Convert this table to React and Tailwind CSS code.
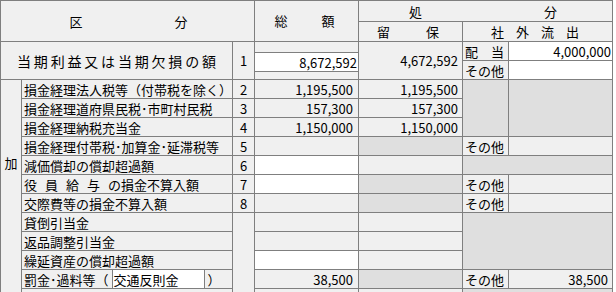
import React from "react";

const L = "bg-[#f0f0f0]";
const D = "bg-[#dfdfdf]";
const W = "bg-white";

function Cell({ className = "", children }) {
  return (
    <div className={"flex items-center overflow-hidden whitespace-nowrap text-[13px] leading-none text-black " + className}>
      {children}
    </div>
  );
}

function Num({ className = "", children }) {
  return <Cell className={"justify-end " + className}>{children}</Cell>;
}

export default function App() {
  return (
    <div className="h-[292px] w-[616px] overflow-hidden bg-white font-['Noto_Sans_CJK_JP',sans-serif]">
      <div className="grid w-fit grid-cols-[20px_210px_21px_103px_103px_45px_103px] grid-rows-[20px_19px_repeat(14,18px)] gap-px bg-[#7f7f7f] p-px">
        {/* header */}
        <Cell className={L + " col-start-1 col-span-3 row-start-1 row-span-2 justify-center gap-[92px] pl-[2px]"}>
          <span>区</span>
          <span>分</span>
        </Cell>
        <Cell className={L + " col-start-4 row-start-1 row-span-2 justify-center gap-[34px] pr-[4px] pb-[1px]"}>
          <span>総</span>
          <span>額</span>
        </Cell>
        <Cell className={L + " col-start-5 col-span-3 row-start-1 justify-center gap-[122px] pr-[5px]"}>
          <span>処</span>
          <span>分</span>
        </Cell>
        <Cell className={L + " col-start-5 row-start-2 justify-center gap-[36px] pr-[5px]"}>
          <span>留</span>
          <span>保</span>
        </Cell>
        <Cell className={L + " col-start-6 col-span-2 row-start-2 justify-center gap-[12px] pr-[5px]"}>
          <span>社</span>
          <span>外</span>
          <span>流</span>
          <span>出</span>
        </Cell>

        {/* row 1 */}
        <Cell className={L + " col-start-1 col-span-2 row-start-3 row-span-2 justify-between px-[16px] text-[14px]"}>
          {"当期利益又は当期欠損の額".split("").map((c, i) => (
            <span key={i}>{c}</span>
          ))}
        </Cell>
        <Cell className={L + " col-start-3 row-start-3 row-span-2 justify-center"}>1</Cell>
        <div className={L + " col-start-4 row-start-3 row-span-2 flex flex-col"}>
          <div className="h-[10px]" />
          <Num className="h-[20px] border-y border-[#7f7f7f] bg-white pr-[1px]">8,672,592</Num>
          <div className="flex-1" />
        </div>
        <Num className={L + " col-start-5 row-start-3 row-span-2 pr-[4px]"}>4,672,592</Num>
        <Cell className={L + " col-start-6 row-start-3 pl-[2px] text-[12px]"}>配　当</Cell>
        <Num className={W + " col-start-7 row-start-3 pr-[1px]"}>4,000,000</Num>
        <Cell className={L + " col-start-6 row-start-4 pl-[2px] text-[12px]"}>その他</Cell>
        <div className={W + " col-start-7 row-start-4"} />

        {/* 加 */}
        <Cell className={L + " col-start-1 row-start-5 row-span-12 items-start justify-center pt-[76px]"}>加</Cell>

        {/* row 2 */}
        <Cell className={L + " col-start-2 row-start-5 pl-[2px]"}>損金経理法人税等（付帯税を除く）</Cell>
        <Cell className={L + " col-start-3 row-start-5 justify-center"}>2</Cell>
        <Num className={L + " col-start-4 row-start-5 pr-[5px]"}>1,195,500</Num>
        <Num className={L + " col-start-5 row-start-5 pr-[4px]"}>1,195,500</Num>
        <div className={D + " col-start-6 row-start-5 row-span-3"} />
        <div className={D + " col-start-7 row-start-5 row-span-3"} />

        {/* row 3 */}
        <Cell className={L + " col-start-2 row-start-6 pl-[2px]"}>損金経理道府県民税･市町村民税</Cell>
        <Cell className={L + " col-start-3 row-start-6 justify-center"}>3</Cell>
        <Num className={L + " col-start-4 row-start-6 pr-[5px]"}>157,300</Num>
        <Num className={L + " col-start-5 row-start-6 pr-[4px]"}>157,300</Num>

        {/* row 4 */}
        <Cell className={L + " col-start-2 row-start-7 pl-[2px]"}>損金経理納税充当金</Cell>
        <Cell className={L + " col-start-3 row-start-7 justify-center"}>4</Cell>
        <Num className={L + " col-start-4 row-start-7 pr-[5px]"}>1,150,000</Num>
        <Num className={L + " col-start-5 row-start-7 pr-[4px]"}>1,150,000</Num>

        {/* row 5 */}
        <Cell className={L + " col-start-2 row-start-8 pl-[2px]"}>損金経理付帯税･加算金･延滞税等</Cell>
        <Cell className={L + " col-start-3 row-start-8 justify-center"}>5</Cell>
        <div className={L + " col-start-4 row-start-8"} />
        <div className={D + " col-start-5 row-start-8"} />
        <Cell className={L + " col-start-6 row-start-8 pl-[2px] text-[12px]"}>その他</Cell>
        <div className={L + " col-start-7 row-start-8"} />

        {/* row 6 */}
        <Cell className={L + " col-start-2 row-start-9 pl-[2px]"}>減価償却の償却超過額</Cell>
        <Cell className={L + " col-start-3 row-start-9 justify-center"}>6</Cell>
        <div className={W + " col-start-4 row-start-9"} />
        <div className={L + " col-start-5 row-start-9"} />
        <div className={D + " col-start-6 col-span-2 row-start-9"} />

        {/* row 7 */}
        <Cell className={L + " col-start-2 row-start-10 pl-[2px]"}>
          <span className="tracking-[8px]">役員給与</span>の損金不算入額
        </Cell>
        <Cell className={L + " col-start-3 row-start-10 justify-center"}>7</Cell>
        <div className={W + " col-start-4 row-start-10"} />
        <div className={D + " col-start-5 row-start-10"} />
        <Cell className={L + " col-start-6 row-start-10 pl-[2px] text-[12px]"}>その他</Cell>
        <div className={L + " col-start-7 row-start-10"} />

        {/* row 8 */}
        <Cell className={L + " col-start-2 row-start-11 pl-[2px]"}>交際費等の損金不算入額</Cell>
        <Cell className={L + " col-start-3 row-start-11 justify-center"}>8</Cell>
        <div className={L + " col-start-4 row-start-11"} />
        <div className={D + " col-start-5 row-start-11"} />
        <Cell className={L + " col-start-6 row-start-11 pl-[2px] text-[12px]"}>その他</Cell>
        <div className={L + " col-start-7 row-start-11"} />

        {/* free rows */}
        <div className={L + " col-start-3 row-start-12 row-span-5"} />

        <Cell className={L + " col-start-2 row-start-12 pl-[2px]"}>貸倒引当金</Cell>
        <div className={L + " col-start-4 row-start-12"} />
        <div className={L + " col-start-5 row-start-12"} />
        <div className={D + " col-start-6 col-span-2 row-start-12 row-span-3"} />

        <Cell className={L + " col-start-2 row-start-13 pl-[2px]"}>返品調整引当金</Cell>
        <div className={L + " col-start-4 row-start-13"} />
        <div className={L + " col-start-5 row-start-13"} />

        <Cell className={L + " col-start-2 row-start-14 pl-[2px]"}>繰延資産の償却超過額</Cell>
        <div className={W + " col-start-4 row-start-14"} />
        <div className={L + " col-start-5 row-start-14"} />

        <Cell className={L + " col-start-2 row-start-15 items-stretch pl-[2px]"}>
          <span className="flex items-center">罰金･過料等（</span>
          <span className="ml-[3px] flex w-[93px] items-center border-x border-[#7f7f7f] bg-white pl-[1px]">交通反則金</span>
          <span className="ml-[3px] flex items-center">）</span>
        </Cell>
        <Num className={L + " col-start-4 row-start-15 pr-[5px]"}>38,500</Num>
        <div className={D + " col-start-5 row-start-15"} />
        <Cell className={L + " col-start-6 row-start-15 pl-[2px] text-[12px]"}>その他</Cell>
        <Num className={L + " col-start-7 row-start-15 pr-[4px]"}>38,500</Num>

        <div className={L + " col-start-2 row-start-16"} />
        <div className={L + " col-start-4 row-start-16"} />
        <div className={L + " col-start-5 row-start-16"} />
        <div className={D + " col-start-6 col-span-2 row-start-16"} />
      </div>
    </div>
  );
}
